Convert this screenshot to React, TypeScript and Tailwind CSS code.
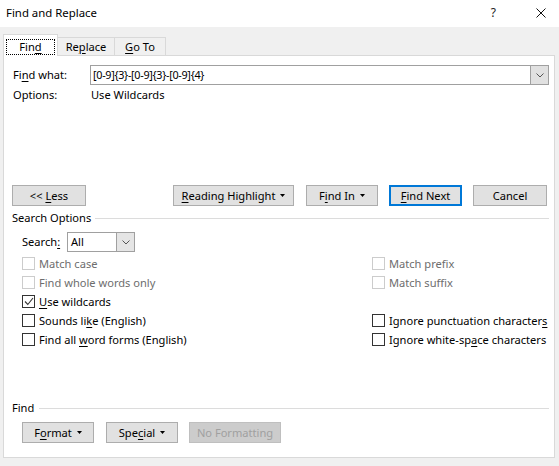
import React from 'react';

const U = ({ children }: { children: React.ReactNode }) => (
  <span className="underline underline-offset-[2px] decoration-1">{children}</span>
);

const Caret = () => (
  <svg width="5" height="3" viewBox="0 0 5 3" className="ml-[5px]">
    <path d="M0 0H5L2.5 3Z" fill="#000" />
  </svg>
);

const Chevron = () => (
  <svg width="8" height="5" viewBox="0 0 8 5">
    <path d="M0.5 0.5L4 4L7.5 0.5" fill="none" stroke="#555" strokeWidth="1" />
  </svg>
);

type BtnProps = {
  children: React.ReactNode;
  className?: string;
  caret?: boolean;
  primary?: boolean;
};

const Btn = ({ children, className = '', caret = false, primary = false }: BtnProps) => (
  <div
    className={`h-[21px] flex items-center justify-center bg-[#e1e1e1] whitespace-nowrap ${
      primary ? 'border-2 border-[#0078d7]' : 'border border-[#adadad]'
    } ${className}`}
  >
    <span>{children}</span>
    {caret && <Caret />}
  </div>
);

const Check = ({
  children,
  checked = false,
  disabled = false,
}: {
  children?: React.ReactNode;
  checked?: boolean;
  disabled?: boolean;
}) => (
  <div className="h-[19px] flex items-center whitespace-nowrap">
    {children !== undefined && (
      <>
        <div
          className={`w-[13px] h-[13px] border bg-white flex items-center justify-center ${
            disabled ? 'border-[#cccccc]' : 'border-[#333333]'
          }`}
        >
          {checked && (
            <svg width="10" height="9" viewBox="0 0 10 9">
              <path d="M1 4.5L3.8 7.5L9 1" fill="none" stroke="#333" strokeWidth="1.1" />
            </svg>
          )}
        </div>
        <span className={`ml-[4px] ${disabled ? 'text-[#6d6d6d]' : 'text-black'}`}>{children}</span>
      </>
    )}
  </div>
);

export default function App() {
  return (
    <div className="w-[559px] h-[466px] bg-[#f0f0f0] text-[11.1px] leading-none text-black font-['Segoe_UI','Noto_Sans',sans-serif] overflow-hidden">
      {/* title bar */}
      <div className="h-[27px] bg-white flex items-center pb-[2px]">
        <span className="ml-[6px] text-[11.4px]">Find and Replace</span>
        <span className="ml-auto text-[12px] text-[#222]">?</span>
        <svg width="10" height="10" viewBox="0 0 10 10" className="ml-[40px] mr-[13px]">
          <path d="M0.5 0.5L9.5 9.5M9.5 0.5L0.5 9.5" stroke="#111" strokeWidth="1" />
        </svg>
      </div>

      {/* tabs */}
      <div className="mt-[7px] pl-[3px] flex items-end h-[21px]">
        <div className="relative z-10 -mb-px w-[55px] h-[22px] bg-white border border-b-0 border-[#d9d9d9] flex items-start justify-center pt-[5px]">
          <span className="outline outline-1 outline-dotted outline-black w-[47px] h-[14px] flex items-center justify-center">
            Fin<U>d</U>
          </span>
        </div>
        <div className="w-[57px] h-[18px] border border-l-0 border-b-0 border-[#d9d9d9] flex items-center justify-center">
          Re<U>p</U>lace
        </div>
        <div className="w-[51px] h-[18px] border border-l-0 border-b-0 border-[#d9d9d9] flex items-center justify-center">
          <U>G</U>o To
        </div>
      </div>

      {/* panel */}
      <div className="ml-[3px] w-[552px] h-[403px] bg-white border border-[#d9d9d9] flex flex-col">
        <div className="mt-[9px] pl-[9px] flex items-center">
          <span className="w-[77px]">
            Fi<U>n</U>d what:
          </span>
          <div className="w-[459px] h-[20px] border border-[#a0a0a0] flex items-center">
            <span className="flex-1 pl-[2px] text-[10.8px] tracking-[-0.3px]">[0-9]{'{3}'}-[0-9]{'{3}'}-[0-9]{'{4}'}</span>
            <div className="w-[18px] h-full bg-[#e1e1e1] border-l border-[#a0a0a0] flex items-center justify-center">
              <Chevron />
            </div>
          </div>
        </div>
        <div className="mt-[1px] h-[18px] pl-[9px] flex items-center">
          <span className="w-[78px]">Options:</span>
          <span>Use Wildcards</span>
        </div>

        {/* button row */}
        <div className="mt-[81px] pl-[8px] flex">
          <Btn className="w-[74px]">
            &lt;&lt; <U>L</U>ess
          </Btn>
          <Btn className="w-[121px] ml-[87px]" caret>
            <U>R</U>eading Highlight
          </Btn>
          <Btn className="w-[72px] ml-[12px]" caret>
            F<U>i</U>nd In
          </Btn>
          <Btn className="w-[73px] ml-[11px]" primary>
            <U>F</U>ind Next
          </Btn>
          <Btn className="w-[74px] ml-[11px]">Cancel</Btn>
        </div>

        {/* search options */}
        <div className="mt-[4px] h-[16px] pl-[8px] pr-[5px] flex items-center">
          <span>Search Options</span>
          <div className="flex-1 h-px bg-[#dcdcdc] ml-[4px]" />
        </div>
        <div className="mt-[6px] pl-[18px] flex items-center">
          <span className="w-[45px]">
            Search<U>:</U>
          </span>
          <div className="w-[68px] h-[20px] border border-[#a0a0a0] flex items-center">
            <span className="flex-1 pl-[3px]">All</span>
            <div className="w-[18px] h-full bg-[#e5e5e5] border-l border-[#a0a0a0] flex items-center justify-center">
              <Chevron />
            </div>
          </div>
        </div>

        <div className="mt-[2px] pl-[18px] grid grid-cols-[350px_1fr]">
          <Check disabled>Match case</Check>
          <Check disabled>Match prefix</Check>
          <Check disabled>Find whole words only</Check>
          <Check disabled>Match suffix</Check>
          <Check checked>
            <U>U</U>se wildcards
          </Check>
          <Check />
          <Check>
            Sounds li<U>k</U>e (English)
          </Check>
          <Check>
            Ignore punctuation character<U>s</U>
          </Check>
          <Check>
            Find all <U>w</U>ord forms (English)
          </Check>
          <Check>
            Ignore white-sp<U>a</U>ce characters
          </Check>
        </div>

        {/* find section */}
        <div className="mt-[51px] h-[16px] pl-[8px] pr-[5px] flex items-center">
          <span>Find</span>
          <div className="flex-1 h-px bg-[#dcdcdc] ml-[5px]" />
        </div>
        <div className="mt-[6px] pl-[18px] flex">
          <Btn className="w-[72px]" caret>
            F<U>o</U>rmat
          </Btn>
          <Btn className="w-[72px] ml-[12px]" caret>
            Spe<U>c</U>ial
          </Btn>
          <div className="w-[92px] ml-[11px] h-[21px] bg-[#cccccc] border border-[#bfbfbf] flex items-center justify-center text-[#a0a0a0] whitespace-nowrap">
            No Formatting
          </div>
        </div>
      </div>
    </div>
  );
}
